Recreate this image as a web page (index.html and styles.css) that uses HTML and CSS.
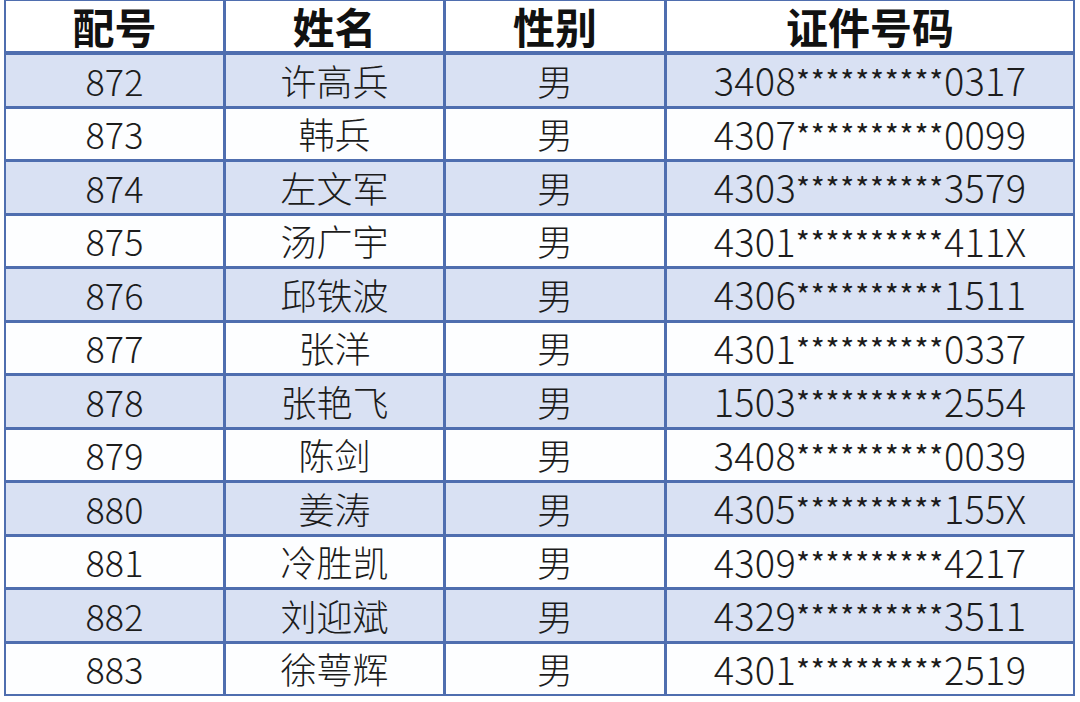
FILE: index.html
```html
<!DOCTYPE html>
<html lang="zh-CN">
<head>
<meta charset="utf-8">
<title>名单</title>
<link rel="stylesheet" href="styles.css">
</head>
<body>
<div class="table">
  <div class="c h">配号</div><div class="c h">姓名</div><div class="c h">性别</div><div class="c h">证件号码</div>
  <div class="c a">872</div><div class="c a">许高兵</div><div class="c a">男</div><div class="c a id">3408<span class="s">**********</span>0317</div>
  <div class="c b">873</div><div class="c b">韩兵</div><div class="c b">男</div><div class="c b id">4307<span class="s">**********</span>0099</div>
  <div class="c a">874</div><div class="c a">左文军</div><div class="c a">男</div><div class="c a id">4303<span class="s">**********</span>3579</div>
  <div class="c b">875</div><div class="c b">汤广宇</div><div class="c b">男</div><div class="c b id">4301<span class="s">**********</span>411X</div>
  <div class="c a">876</div><div class="c a">邱铁波</div><div class="c a">男</div><div class="c a id">4306<span class="s">**********</span>1511</div>
  <div class="c b">877</div><div class="c b">张洋</div><div class="c b">男</div><div class="c b id">4301<span class="s">**********</span>0337</div>
  <div class="c a">878</div><div class="c a">张艳飞</div><div class="c a">男</div><div class="c a id">1503<span class="s">**********</span>2554</div>
  <div class="c b">879</div><div class="c b">陈剑</div><div class="c b">男</div><div class="c b id">3408<span class="s">**********</span>0039</div>
  <div class="c a">880</div><div class="c a">姜涛</div><div class="c a">男</div><div class="c a id">4305<span class="s">**********</span>155X</div>
  <div class="c b">881</div><div class="c b">冷胜凯</div><div class="c b">男</div><div class="c b id">4309<span class="s">**********</span>4217</div>
  <div class="c a">882</div><div class="c a">刘迎斌</div><div class="c a">男</div><div class="c a id">4329<span class="s">**********</span>3511</div>
  <div class="c b">883</div><div class="c b">徐萼辉</div><div class="c b">男</div><div class="c b id">4301<span class="s">**********</span>2519</div>
</div>
</body>
</html>
```
FILE: styles.css
```css
html, body {
  margin: 0;
  padding: 0;
  background: #ffffff;
}
body {
  font-family: "Noto Sans CJK SC", "Noto Sans", sans-serif;
  color: #1c1c1c;
}
.table {
  margin-left: 4px;
  width: 1071px;
  box-sizing: border-box;
  display: grid;
  grid-template-columns: 217px 217px 218px 406px;
  grid-template-rows: 51px repeat(12, 50.5px);
  column-gap: 3px;
  row-gap: 3px;
  padding: 1px 2px 2px 2px;
  background: #4f6eaf;
}
.c {
  display: flex;
  align-items: center;
  justify-content: center;
  font-size: 36px;
  font-weight: 300;
  line-height: 1.2;
  white-space: nowrap;
}
.h {
  background: #ffffff;
  font-size: 42px;
  font-weight: 700;
  line-height: 1.1;
  color: #111111;
  margin-bottom: 1px;
}
.a {
  background: #d9e1f3;
}
.b {
  background: #fdfeff;
}
.id {
  font-size: 38px;
  letter-spacing: 0.2px;
}
.s {
  font-size: 30px;
  font-weight: 400;
  letter-spacing: 0.8px;
  vertical-align: -5px;
}
```
